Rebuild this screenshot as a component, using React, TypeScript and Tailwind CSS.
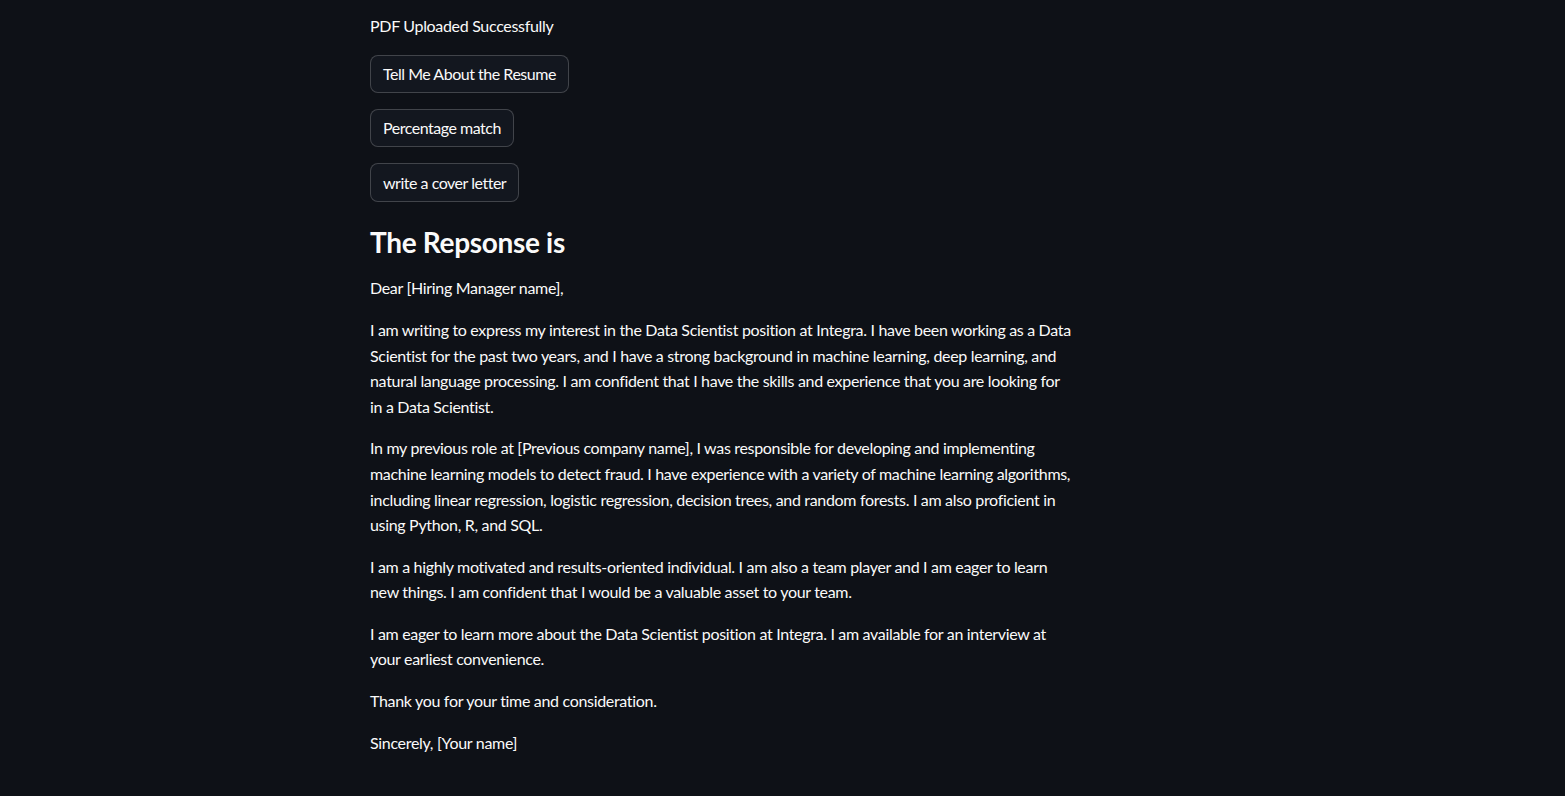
import React from "react";

const buttons = ["Tell Me About the Resume", "Percentage match", "write a cover letter"];

const paragraphs = [
  "Dear [Hiring Manager name],",
  "I am writing to express my interest in the Data Scientist position at Integra. I have been working as a Data Scientist for the past two years, and I have a strong background in machine learning, deep learning, and natural language processing. I am confident that I have the skills and experience that you are looking for in a Data Scientist.",
  "In my previous role at [Previous company name], I was responsible for developing and implementing machine learning models to detect fraud. I have experience with a variety of machine learning algorithms, including linear regression, logistic regression, decision trees, and random forests. I am also proficient in using Python, R, and SQL.",
  "I am a highly motivated and results-oriented individual. I am also a team player and I am eager to learn new things. I am confident that I would be a valuable asset to your team.",
  "I am eager to learn more about the Data Scientist position at Integra. I am available for an interview at your earliest convenience.",
  "Thank you for your time and consideration.",
  "Sincerely, [Your name]",
];

const App: React.FC = () => {
  return (
    <div className="min-h-screen bg-[#0e1117] text-[#fafafa] font-['Lato',sans-serif] text-base tracking-[-0.02em]">
      <div className="pl-[370px] pt-[13px]">
        <div className="w-[704px] flex flex-col gap-4">
          <p className="leading-[25.6px]">PDF Uploaded Successfully</p>
          {buttons.map((b) => (
            <div key={b}>
              <button className="h-[38.4px] px-3 rounded-lg border border-[rgba(250,250,250,0.2)] bg-[#13171f] text-[#fafafa] leading-[25.6px] tracking-[-0.03em]">
                {b}
              </button>
            </div>
          ))}
          <h3 className="text-[28px] font-bold leading-[33.6px] pt-[8px]">The Repsonse is</h3>
          <div>
            {paragraphs.map((p, i) => (
              <p key={i} className="leading-[25.6px] mb-4">
                {p}
              </p>
            ))}
          </div>
        </div>
      </div>
    </div>
  );
};

export default App;
